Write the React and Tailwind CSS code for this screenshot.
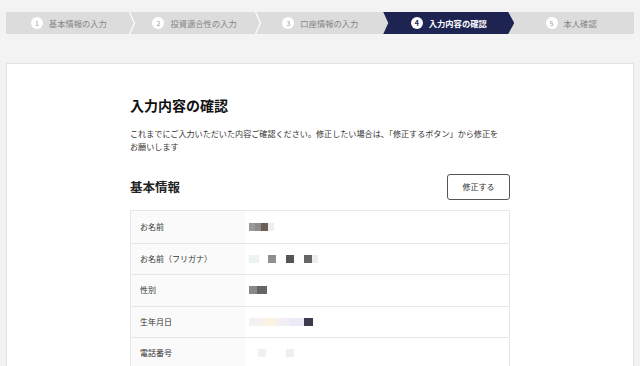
import React from "react";

const steps = [
  { n: 1, label: "基本情報の入力" },
  { n: 2, label: "投資適合性の入力" },
  { n: 3, label: "口座情報の入力" },
  { n: 4, label: "入力内容の確認", active: true },
  { n: 5, label: "本人確認" },
];

// pixelated (blurred) personal data, as blocks [color, width, gap before]
const rows = [
  { label: "お名前", blocks: [["#9a9a9a", 6, 0], ["#8c8c8c", 6, 0], ["#6b5e55", 7, 0], ["#eeeeee", 6, 0]] },
  {
    label: "お名前（フリガナ）",
    blocks: [["#eef3f1", 10, 0], ["#8f8f8f", 8, 9], ["#555555", 8, 10], ["#666666", 8, 10], ["#ededed", 6, 0]],
  },
  { label: "性別", blocks: [["#888888", 8, 0], ["#666666", 10, 0]] },
  {
    label: "生年月日",
    blocks: [["#f4f2f0", 14, 0], ["#fbf2e4", 14, 0], ["#f2eff3", 12, 0], ["#eaebf7", 15, 0], ["#3e3a4c", 9, 0]],
  },
  { label: "電話番号", blocks: [["#f0f0f0", 8, 9], ["#efefef", 8, 20]] },
];

function Stepper() {
  return (
    <div className="flex h-[22px] bg-[#dcdcdc]">
      {steps.map((s, i) => (
        <div
          key={s.n}
          className={
            s.active
              ? "relative z-10 flex w-[131px] mr-[-6px] items-center justify-center gap-[6px] bg-[#1e2452] [clip-path:polygon(0_0,calc(100%-6px)_0,100%_50%,calc(100%-6px)_100%,0_100%,5px_50%)]"
              : "relative flex flex-1 items-center justify-center gap-[6px]"
          }
        >
          <span
            className={
              "flex h-[12px] w-[12px] items-center justify-center rounded-full bg-white text-[7px] " +
              (s.active ? "font-bold text-[#1e2452]" : "text-[#999]")
            }
          >
            {s.n}
          </span>
          <span className={"text-[8.3px] " + (s.active ? "font-bold text-white" : "text-[#858585]")}>
            {s.label}
          </span>
          {i < 2 && (
            <svg className="absolute right-[-3px] top-0 h-full w-[6px]" viewBox="0 0 6 22">
              <polyline points="0.5,0 5.5,11 0.5,22" fill="none" stroke="#ffffff" strokeWidth="1.2" />
            </svg>
          )}
        </div>
      ))}
    </div>
  );
}

export default function App() {
  return (
    <div
      className="h-[366px] overflow-hidden bg-[#f3f3f3] px-[6px] pt-[12px]"
      style={{ fontFamily: '"Noto Sans CJK JP", "Noto Sans", sans-serif' }}
    >
      <Stepper />

      <div className="mt-[29px] h-[400px] border border-[#e3e3e3] bg-white">
        <div className="mx-auto w-[380px] pt-[31px]">
          <h1 className="text-[14px] font-bold leading-[20px] text-[#111]">入力内容の確認</h1>
          <p className="mt-[12px] text-[8.1px] leading-[13px] text-[#333]">
            これまでにご入力いただいた内容ご確認ください。修正したい場合は、「修正するボタン」から修正を
            <br />
            お願いします
          </p>

          {/* 基本情報 */}
          <div className="mt-[21px] flex items-center justify-between">
            <h2 className="text-[12.5px] font-bold text-[#222]">基本情報</h2>
            <button className="h-[26px] w-[63px] rounded-[3px] border border-[#555] bg-white text-[8px] text-[#333]">
              修正する
            </button>
          </div>

          <div className="mt-[10px] border border-[#e6e6e6]">
            {rows.map((r, i) => (
              <div
                key={r.label}
                className={"flex h-[31.5px] " + (i > 0 ? "border-t border-[#e6e6e6]" : "")}
              >
                <div className="flex w-[114px] items-center bg-[#fafafa] pl-[9px] text-[8px] text-[#333]">
                  {r.label}
                </div>
                <div className="flex items-center pl-[4px]">
                  {r.blocks.map((b, j) => (
                    <span
                      key={j}
                      className="h-[8px]"
                      style={{ background: b[0], width: b[1], marginLeft: b[2] }}
                    />
                  ))}
                </div>
              </div>
            ))}
          </div>
        </div>
      </div>
    </div>
  );
}
